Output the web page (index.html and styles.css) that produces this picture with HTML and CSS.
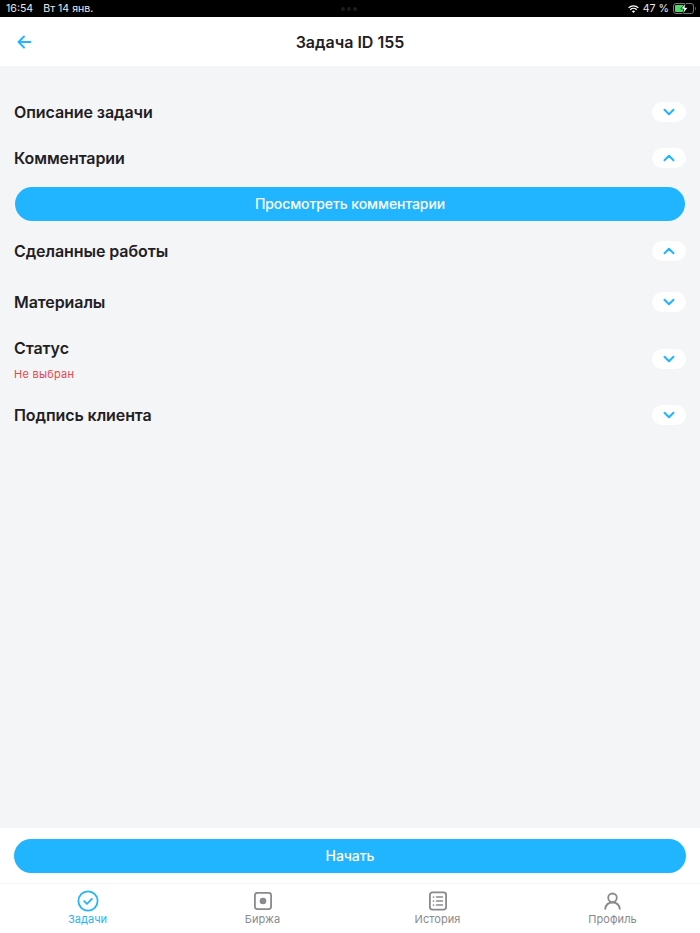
FILE: index.html
```html
<!DOCTYPE html>
<html lang="ru">
<head>
<meta charset="utf-8">
<title>Задача ID 155</title>
<link rel="stylesheet" href="styles.css">
</head>
<body>
<div class="app">
  <div class="statusbar">
    <div class="status-left"><span>16:54</span><span>Вт 14 янв.</span></div>
    <div class="status-dots"><i></i><i></i><i></i></div>
    <div class="status-right">
      <svg class="wifi" width="11" height="8" viewBox="0 0 11 8"><path d="M.6 2.900a7 7 0 0 1 9.800 0" fill="none" stroke="#fff" stroke-width="1.300"/><path d="M2.300 4.700a4.600 4.600 0 0 1 6.400 0" fill="none" stroke="#fff" stroke-width="1.300"/><path d="M5.500 8 3.900 6.300a2.400 2.400 0 0 1 3.200 0z" fill="#fff"/></svg>
      <span>47 %</span>
      <svg class="battery" width="24" height="11" viewBox="0 0 24 11"><rect x=".5" y=".5" width="20" height="10" rx="2.500" fill="none" stroke="#777"/><rect x="2" y="2" width="9" height="7" rx="1" fill="#4cd964"/><path d="M22 3.600c1 .4 1.200 3.400 0 3.800z" fill="#777"/><path d="M12.600 0 7.800 6h3l-1 5 5.200-6.500h-3.100z" fill="#fff" stroke="#000" stroke-width=".7"/></svg>
    </div>
  </div>

  <header class="topbar">
    <svg class="back" width="16" height="14" viewBox="0 0 16 14"><path d="M14.500 7H2.500M8 1.500 2.500 7 8 12.500" fill="none" stroke="#22b5ff" stroke-width="1.900" stroke-linecap="round" stroke-linejoin="round"/></svg>
    <h1>Задача ID 155</h1>
  </header>

  <main class="content">
    <section class="row">
      <h2>Описание задачи</h2>
      <span class="toggle"><svg width="12" height="8" viewBox="0 0 12 8"><path d="m1.500 1.700 4.500 4.500 4.500-4.500" fill="none" stroke="#22b5ff" stroke-width="2" stroke-linecap="round" stroke-linejoin="round"/></svg></span>
    </section>
    <section class="row row-open">
      <h2>Комментарии</h2>
      <span class="toggle"><svg width="12" height="8" viewBox="0 0 12 8"><path d="m1.500 6.300 4.500-4.500 4.500 4.500" fill="none" stroke="#22b5ff" stroke-width="2" stroke-linecap="round" stroke-linejoin="round"/></svg></span>
    </section>
    <button class="btn btn-comments">Просмотреть комментарии</button>
    <section class="row row-works">
      <h2>Сделанные работы</h2>
      <span class="toggle"><svg width="12" height="8" viewBox="0 0 12 8"><path d="m1.500 6.300 4.500-4.500 4.500 4.500" fill="none" stroke="#22b5ff" stroke-width="2" stroke-linecap="round" stroke-linejoin="round"/></svg></span>
    </section>
    <section class="row">
      <h2>Материалы</h2>
      <span class="toggle"><svg width="12" height="8" viewBox="0 0 12 8"><path d="m1.500 1.700 4.500 4.500 4.500-4.500" fill="none" stroke="#22b5ff" stroke-width="2" stroke-linecap="round" stroke-linejoin="round"/></svg></span>
    </section>
    <section class="row row-status">
      <div class="status-text">
        <h2>Статус</h2>
        <p class="error">Не выбран</p>
      </div>
      <span class="toggle"><svg width="12" height="8" viewBox="0 0 12 8"><path d="m1.500 1.700 4.500 4.500 4.500-4.500" fill="none" stroke="#22b5ff" stroke-width="2" stroke-linecap="round" stroke-linejoin="round"/></svg></span>
    </section>
    <section class="row">
      <h2>Подпись клиента</h2>
      <span class="toggle"><svg width="12" height="8" viewBox="0 0 12 8"><path d="m1.500 1.700 4.500 4.500 4.500-4.500" fill="none" stroke="#22b5ff" stroke-width="2" stroke-linecap="round" stroke-linejoin="round"/></svg></span>
    </section>
  </main>

  <div class="action">
    <button class="btn btn-start">Начать</button>
  </div>

  <nav class="tabs">
    <a class="tab tab-active">
      <svg width="22" height="22" viewBox="0 0 22 22"><circle cx="11" cy="11" r="9.600" fill="none" stroke="#22b5ff" stroke-width="1.800"/><path d="m7.200 11.200 2.700 2.600 5-5" fill="none" stroke="#22b5ff" stroke-width="1.800" stroke-linecap="round" stroke-linejoin="round"/></svg>
      <span>Задачи</span>
    </a>
    <a class="tab">
      <svg width="22" height="22" viewBox="0 0 22 22"><rect x="2.900" y="2.900" width="16.200" height="16.200" rx="2.500" fill="none" stroke="#8a8a8e" stroke-width="1.800"/><circle cx="11" cy="11" r="3.300" fill="#8a8a8e"/></svg>
      <span>Биржа</span>
    </a>
    <a class="tab">
      <svg width="22" height="22" viewBox="0 0 22 22"><rect x="2.900" y="2.400" width="16.200" height="17.200" rx="2.500" fill="none" stroke="#8a8a8e" stroke-width="1.800"/><path d="M9.500 7h6M9.500 11h6M9.500 15h6" stroke="#8a8a8e" stroke-width="1.500" stroke-linecap="round"/><path d="M6.500 7h.1M6.500 11h.1M6.500 15h.1" stroke="#8a8a8e" stroke-width="1.700" stroke-linecap="round"/></svg>
      <span>История</span>
    </a>
    <a class="tab">
      <svg width="22" height="22" viewBox="0 0 22 22"><circle cx="10.500" cy="7.800" r="4.300" fill="none" stroke="#8a8a8e" stroke-width="1.800"/><path d="M3.200 18.900c.5-3.800 3.200-6.400 7.300-6.400s6.800 2.600 7.300 6.400" fill="none" stroke="#8a8a8e" stroke-width="1.800" stroke-linecap="round"/></svg>
      <span>Профиль</span>
    </a>
  </nav>
</div>
</body>
</html>
```
FILE: styles.css
```css
* { box-sizing: border-box; }
html, body { margin: 0; padding: 0; height: 100%; }
body { font-family: Inter, "Liberation Sans", sans-serif; background: #fff; color: #1f2023; }

.app { width: 700px; height: 933px; display: flex; flex-direction: column; overflow: hidden; }

.statusbar {
  flex: 0 0 17px; background: #000; color: #e8e8e8;
  display: flex; align-items: center; justify-content: space-between;
  padding: 0 3px 0 6px; font-size: 10.600px; position: relative;
}
.status-left { display: flex; gap: 10px; }
.status-dots { position: absolute; left: 341px; top: 7px; display: flex; gap: 2px; }
.status-dots i { width: 4px; height: 4px; border-radius: 50%; background: #1d1d1f; }
.status-right { display: flex; align-items: center; gap: 4px; }

.topbar {
  flex: 0 0 49px; background: #fff; position: relative;
  display: flex; align-items: center; justify-content: center;
}
.back { position: absolute; left: 16px; top: 18px; }
.topbar h1 { margin: 0; font-size: 16px; font-weight: 600; }

.content { flex: 1; background: #f4f5f7; padding: 36px 14px 0; display: flex; flex-direction: column; }

.row { display: flex; align-items: center; justify-content: space-between; min-height: 20px; margin-bottom: 26px; }
.row h2 { margin: 0; font-size: 16px; line-height: 20px; font-weight: 600; letter-spacing: -.08px; }
.row-open { margin-bottom: 19px; }
.row-works { margin-bottom: 31px; }
.row-status { margin-bottom: 25px; }

.toggle {
  width: 34px; height: 20px; border-radius: 10px; background: #fff;
  display: flex; align-items: center; justify-content: center;
}

.btn {
  display: block; border: 0; background: #22b5ff; color: #fff;
  font-family: inherit; font-size: 14px; font-weight: 500; letter-spacing: -.08px;
  height: 34px; border-radius: 17px; padding: 0 0 2px;
}
.btn-comments { width: 670px; margin: 0 1px 20px; }
.btn-start { width: 672px; }

.status-text { height: 42px; }
.error { margin: 10px 0 0; font-size: 11px; line-height: 13px; color: #e5484d; letter-spacing: .25px; }

.action { flex: 0 0 55px; background: #fff; padding: 11px 14px 0; }

.tabs {
  flex: 0 0 50px; background: #fff; border-top: 1px solid #f3f4f6;
  display: grid; grid-template-columns: repeat(4, 1fr);
}
.tab { display: flex; flex-direction: column; align-items: center; padding-top: 6px; color: #8a8a8e; }
.tab svg { display: block; }
.tab span { font-size: 11px; line-height: 14px; letter-spacing: .05px; }
.tab-active { color: #22b5ff; }
```
